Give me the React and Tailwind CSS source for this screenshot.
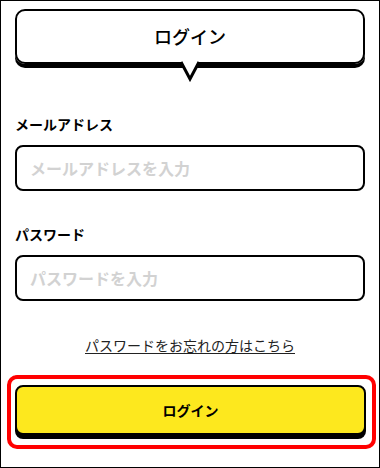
import React from "react";

const Field = ({ label, placeholder, type, className }) => (
    <div className={className}>
        <div className="text-[14px] leading-[20px] font-bold text-black">{label}</div>
        <input
            type={type}
            placeholder={placeholder}
            className="mt-[11px] block w-full h-[46px] border-2 border-black rounded-[8px] px-[13px] text-[16px] font-bold outline-none placeholder:text-[#d2d2d2]"
        />
    </div>
);

const App = () => {
    return (
        <div
            className="w-[380px] h-[468px] border border-black bg-white overflow-hidden"
            style={{ fontFamily: '"Noto Sans CJK JP", "Noto Sans", sans-serif' }}
        >
            <div className="relative mx-[14px] mt-[8px]">
                <div className="h-[55px] border-2 border-black rounded-[10px] shadow-[0_4px_0_0_#000] flex items-center justify-center">
                    <span className="text-[18px] font-medium text-black">ログイン</span>
                </div>
                <svg className="absolute left-[164px] top-[52px]" width="22" height="21" viewBox="0 0 22 21">
                    <polygon points="2,0 20,0 11,18" fill="#fff" />
                    <polyline points="2,1 11,18 20,1" fill="none" stroke="#000" strokeWidth="3" strokeLinejoin="miter" />
                </svg>
            </div>

            <div className="px-[14px]">
                <Field className="mt-[50px]" label="メールアドレス" placeholder="メールアドレスを入力" type="email" />
                <Field className="mt-[33px]" label="パスワード" placeholder="パスワードを入力" type="password" />

                <div className="mt-[31px] text-center">
                    <a href="#" className="text-[14px] leading-[20px] text-[#222] underline underline-offset-2">
                        パスワードをお忘れの方はこちら
                    </a>
                </div>
            </div>

            <div className="mt-[19px] ml-[6px] w-[369px] border-4 border-[#ff0000] rounded-[10px] pl-[4px] pr-[6px] pt-[6px] pb-[10px]">
                <button className="w-full h-[50px] border-2 border-black rounded-[8px] bg-[#fde81e] shadow-[0_4px_0_0_#000] text-[14px] font-bold text-black">
                    ログイン
                </button>
            </div>
        </div>
    );
};

export default App;
